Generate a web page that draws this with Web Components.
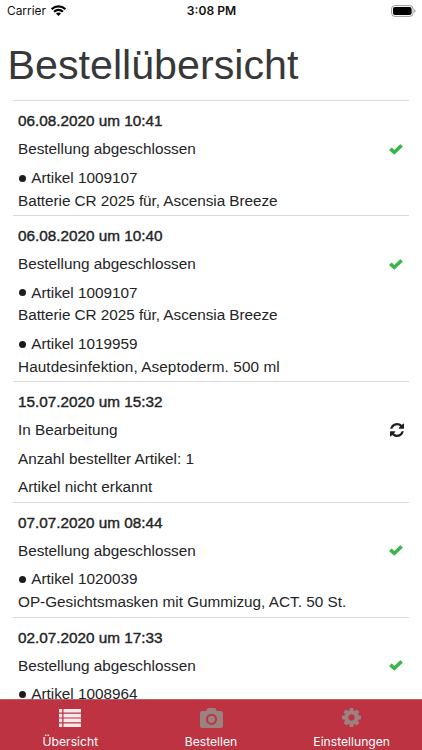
<!DOCTYPE html>
<html lang="de">
<head>
<meta charset="utf-8">
<title>Bestellübersicht</title>
<style>
html, body { margin: 0; height: 100%; overflow: hidden; background: #fff; }
</style>
</head>
<body>
<order-app></order-app>
<script>
const define = (name, html) => customElements.define(name, class extends HTMLElement {
  constructor() {
    super();
    this.attachShadow({ mode: 'open' }).innerHTML = html;
  }
});

define('status-bar', `
<style>
:host { display: grid; grid-template-columns: 1fr auto 1fr; align-items: center; height: 22px; flex: none;
  box-sizing: border-box; padding: 0 6px 0 7px; font: 11.9px/22px Inter, sans-serif; color: #111; }
.left { display: flex; align-items: center; gap: 5px; }
.left svg { margin-bottom: 2px; }
.time { font-weight: 600; font-size: 12.1px; }
.bat { justify-self: end; }
svg { display: block; }
</style>
<div class="left"><span>Carrier</span>
<svg width="15" height="11" viewBox="0 0 15 11" fill="none" stroke="#000" stroke-width="2.2">
<path d="M.6 4.1C4.5.4 10.500.4 14.400 4.1"/><path d="M3.100 6.700C5.600 4.200 9.400 4.200 11.900 6.700"/><path d="M7.500 11L5 8.500C6.500 7.100 8.500 7.100 10 8.500Z" fill="#000" stroke="none"/></svg></div>
<span class="time">3:08 PM</span>
<svg class="bat" width="25" height="12" viewBox="0 0 25 12"><rect x=".6" y=".6" width="21.400" height="10.800" rx="3.200" fill="#fff" stroke="#999" stroke-width="1"/><rect x="2" y="2" width="18.600" height="8" rx="1.900" fill="#000"/><path d="M23.200 4.200q1.400.6 1.400 1.800t-1.400 1.800z" fill="#999"/></svg>`);

define('page-title', `
<style>
:host { display: block; flex: none; height: 78px; box-sizing: border-box; padding: 18.500px 0 0 7.600px;
  font: 41.200px/49px "Liberation Sans", Arial, sans-serif; color: #373839; white-space: nowrap; }
</style><slot></slot>`);

const icons = {
  done: `<svg width="14" height="11" viewBox="0 0 14 11"><path d="M.4 5.700L2.300 3.700Q2.700 3.400 3.100 3.700L5.300 5.900L10.900.5Q11.400.1 11.800.5L13.500 2.200Q13.800 2.600 13.500 3L5.800 10.200Q5.300 10.600 4.800 10.200L.4 6.400Q.1 6 .4 5.700Z" fill="#3bb54a"/></svg>`,
  busy: `<svg width="14" height="14" viewBox="0 0 1536 1536"><path fill="#1f2022" d="M1511 928q0 5-1 7-64 268-268 434.500T764 1536q-146 0-282.500-55T238 1324l-129 129q-19 19-45 19t-45-19-19-45V960q0-26 19-45t45-19h448q26 0 45 19t19 45-19 45l-137 137q71 66 161 102t187 36q134 0 250-65t186-179q11-17 53-117 8-23 30-23h192q13 0 22.500 9.500t9.500 22.500zm25-800v448q0 26-19 45t-45 19h-448q-26 0-45-19t-19-45 19-45l138-138Q969 256 768 256q-134 0-250 65T332 500q-11 17-53 117-8 23-30 23H50q-13 0-22.500-9.500T18 608v-7q65-268 270-434.500T768 0q146 0 284 55.500T1297 212l130-129q19-19 45-19t45 19 19 45z"/></svg>`
};

customElements.define('order-entry', class extends HTMLElement {
  constructor() {
    super();
    this.attachShadow({ mode: 'open' });
  }
  connectedCallback() {
    this.shadowRoot.innerHTML = `
<style>
:host { display: flex; flex-direction: column; gap: 5.300px; box-sizing: border-box; flex: none;
  border-top: 1px solid #d9dadb; padding: 9.200px 5px 2.500px;
  font: 15.300px/22.900px "Liberation Sans", Arial, sans-serif; color: #232425; }
.date { -webkit-text-stroke: .4px #232425; }
.state { display: flex; justify-content: space-between; align-items: center; }
.state svg { margin: -1px .700px 0 0; }
.state svg[height="14"] { margin-right: 0; }
</style>
<div class="date">${this.getAttribute('date')}</div>
<div class="state"><span>${this.getAttribute('state')}</span>${icons[this.getAttribute('icon')]}</div>
<slot></slot>`;
  }
});

customElements.define('order-article', class extends HTMLElement {
  constructor() {
    super();
    this.attachShadow({ mode: 'open' });
  }
  connectedCallback() {
    this.shadowRoot.innerHTML = `
<style>
:host { display: block; white-space: nowrap; }
.no { display: flex; align-items: center; gap: 4.800px; }
.name { letter-spacing: var(--tracking, 0); }
i { width: 7px; height: 7px; border-radius: 50%; background: #1c1c1d; margin-left: 1.400px; }
</style>
<div class="no"><i></i><span>Artikel ${this.getAttribute('number')}</span></div>
<div class="name"><slot></slot></div>`;
  }
});

define('order-note', `<style>:host { display: block; }</style><slot></slot>`);

define('tab-item', `
<style>
:host { display: flex; flex-direction: column; align-items: center; flex: 1;
  font: 12.150px/16px Inter, sans-serif; color: #fff; }
.icon { height: 34px; display: flex; align-items: center; padding-top: 1px; box-sizing: border-box; }
</style>
<div class="icon"><slot name="icon"></slot></div><span><slot></slot></span>`);

define('tab-bar', `
<style>
:host { display: flex; flex: none; height: 51px; box-sizing: border-box; background: #be3341; border-top: 1px solid #b5626b; }
</style><slot></slot>`);

define('order-app', `
<style>
:host { display: flex; flex-direction: column; height: 750px; width: 422px; overflow: hidden; background: #fff; }
main { flex: 1; min-height: 0; overflow: hidden; display: flex; flex-direction: column; padding: 0 13px; }
.processing { padding-bottom: 3px; }
.tight { --tracking: -.04px; }
.wide { --tracking: .09px; }
svg { display: block; }
</style>
<status-bar></status-bar>
<page-title>Bestellübersicht</page-title>
<main>
<order-entry date="06.08.2020 um 10:41" state="Bestellung abgeschlossen" icon="done">
<order-article class="tight" number="1009107">Batterie CR 2025 für, Ascensia Breeze</order-article></order-entry>
<order-entry date="06.08.2020 um 10:40" state="Bestellung abgeschlossen" icon="done">
<order-article class="tight" number="1009107">Batterie CR 2025 für, Ascensia Breeze</order-article>
<order-article class="wide" number="1019959">Hautdesinfektion, Aseptoderm. 500 ml</order-article></order-entry>
<order-entry class="processing" date="15.07.2020 um 15:32" state="In Bearbeitung" icon="busy">
<order-note>Anzahl bestellter Artikel: 1</order-note><order-note>Artikel nicht erkannt</order-note></order-entry>
<order-entry date="07.07.2020 um 08:44" state="Bestellung abgeschlossen" icon="done">
<order-article number="1020039">OP-Gesichtsmasken mit Gummizug, ACT. 50 St.</order-article></order-entry>
<order-entry date="02.07.2020 um 17:33" state="Bestellung abgeschlossen" icon="done">
<order-article number="1008964"></order-article></order-entry>
</main>
<tab-bar>
<tab-item><svg slot="icon" width="22" height="18" viewBox="0 0 22 18" fill="#fbe9eb"><path d="M0 0h3.200v3.600H0zM4.500 0H22v3.600H4.500zM0 4.800h3.200v3.600H0zM4.500 4.800H22v3.600H4.500zM0 9.600h3.200v3.600H0zM4.500 9.600H22v3.600H4.500zM0 14.400h3.200V18H0zM4.500 14.400H22V18H4.500z"/></svg>Übersicht</tab-item>
<tab-item><svg slot="icon" width="23" height="20" viewBox="0 0 23 20"><path fill="#9b8281" fill-rule="evenodd" d="M2.500 3H6L7 1.200Q7.500 0 8.700 0h5.600Q15.500 0 16 1.200L17 3h3.500Q23 3 23 5.500v12Q23 20 20.500 20h-18Q0 20 0 17.500v-12Q0 3 2.500 3zM11.500 5.700a5.600 5.600 0 1 0 0 11.200a5.600 5.600 0 0 0 0-11.200zm0 2a3.600 3.600 0 1 1 0 7.200a3.600 3.600 0 0 1 0-7.200z"/></svg>Bestellen</tab-item>
<tab-item><svg slot="icon" width="19" height="19" viewBox="0 0 1536 1536"><path fill="#9b8281" d="M1024 768q0-106-75-181t-181-75-181 75-75 181 75 181 181 75 181-75 75-181zm512-109v222q0 12-8 23t-20 13l-185 28q-19 54-39 91 35 50 107 138 10 12 10 25t-9 23q-27 37-99 108t-94 71q-12 0-26-9l-138-108q-44 23-91 38-16 136-29 186-7 28-36 28H657q-14 0-24.500-8.500T621 1506l-28-184q-49-16-90-37l-141 107q-10 9-25 9-14 0-25-11-126-114-165-168-7-10-7-23 0-12 8-23 15-21 51-66.500t54-70.500q-27-50-41-99L29 913q-13-2-21-12.500T0 877V655q0-12 8-23t19-13l186-28q14-46 39-92-40-57-107-138-10-12-10-24 0-10 9-23 26-36 98.500-107.500T337 135q13 0 26 10l138 107q44-23 91-38 16-136 29-186 7-28 36-28h222q14 0 24.500 8.500T915 30l28 184q49 16 90 37l142-107q9-9 24-9 13 0 25 10 129 119 165 170 7 8 7 22 0 12-8 23-15 21-51 66.500t-54 70.500q26 50 41 98l183 28q13 2 21 12.500t8 23.500z"/></svg>Einstellungen</tab-item>
</tab-bar>`);
</script>
</body>
</html>
